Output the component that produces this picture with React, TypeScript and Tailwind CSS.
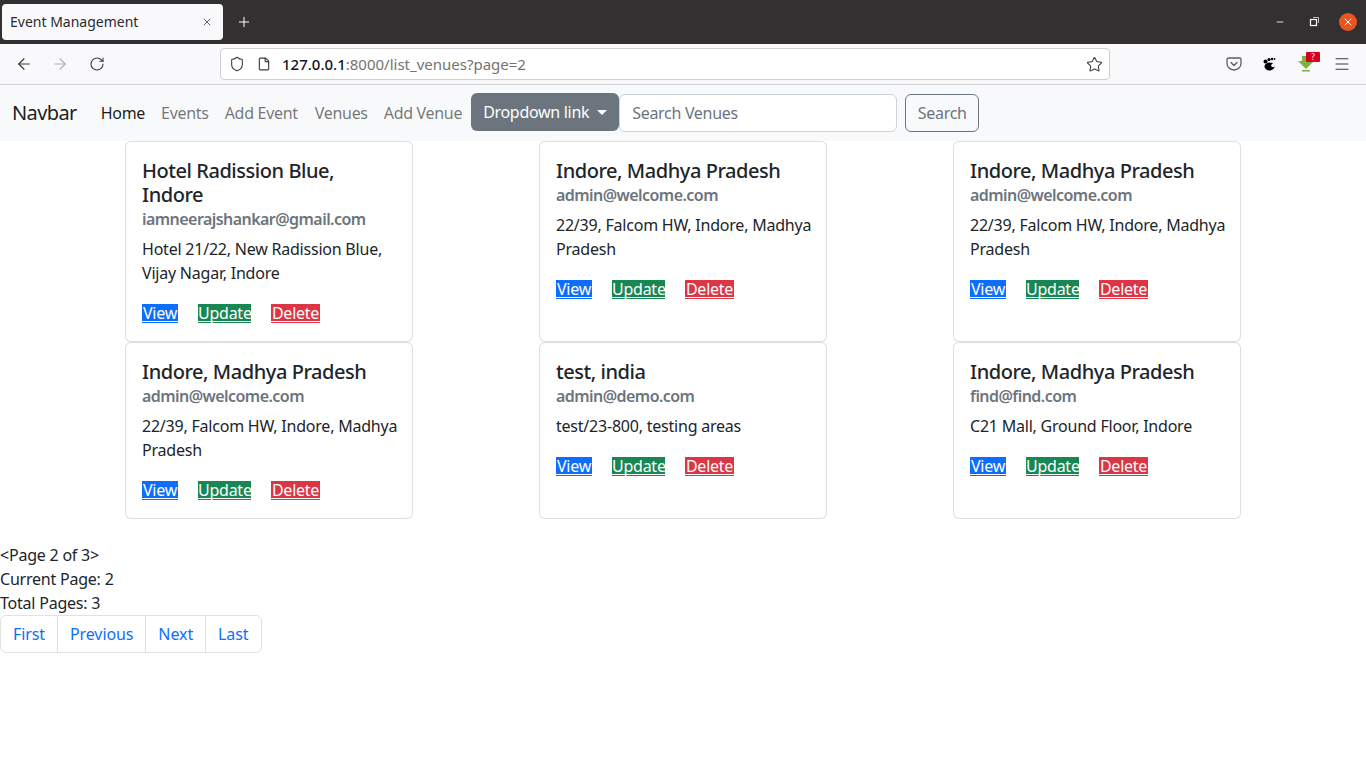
import { ArrowLeft, ArrowRight, RotateCw, Shield, File, Star, Menu, X, Plus, Minus } from "lucide-react";

const venues = [
  { name: "Hotel Radission Blue, Indore", email: "iamneerajshankar@gmail.com", address: "Hotel 21/22, New Radission Blue, Vijay Nagar, Indore" },
  { name: "Indore, Madhya Pradesh", email: "admin@welcome.com", address: "22/39, Falcom HW, Indore, Madhya Pradesh" },
  { name: "Indore, Madhya Pradesh", email: "admin@welcome.com", address: "22/39, Falcom HW, Indore, Madhya Pradesh" },
  { name: "Indore, Madhya Pradesh", email: "admin@welcome.com", address: "22/39, Falcom HW, Indore, Madhya Pradesh" },
  { name: "test, india", email: "admin@demo.com", address: "test/23-800, testing areas" },
  { name: "Indore, Madhya Pradesh", email: "find@find.com", address: "C21 Mall, Ground Floor, Indore" },
];

function BrowserChrome() {
  return (
    <div className="font-['Noto_Sans',sans-serif]">
      {/* Title bar */}
      <div className="flex h-11 items-center bg-[#323031] pl-0.5 pr-[9px]">
        <div className="flex h-9 w-[221px] items-center justify-between rounded bg-[#f9f9fb] pl-2 pr-2.5 text-[14px] text-[#2b2a33]">
          <span>Event Management</span>
          <X size={12} strokeWidth={1.5} />
        </div>
        <Plus size={16} strokeWidth={1.5} className="ml-[13px] text-white" />
        <div className="flex-1" />
        <Minus size={10} strokeWidth={2} className="mr-6 text-white" />
        <svg width="10" height="10" viewBox="0 0 10 10" className="mr-5 text-white" fill="none" stroke="currentColor">
          <rect x="1.5" y="2.5" width="6" height="6" strokeWidth="1.2" />
          <path d="M4 .5h5.5V6" strokeWidth=".7" />
        </svg>
        <div className="flex h-[18px] w-[18px] items-center justify-center rounded-full bg-[#e95420] text-white">
          <X size={12} strokeWidth={2} />
        </div>
      </div>

      {/* Address bar */}
      <div className="flex h-[41px] items-center border-b border-[#cfcfd1] bg-[#f9f9fb] pl-[15px] pr-[15px] text-[#3b3a42]">
        <ArrowLeft size={18} strokeWidth={1.5} />
        <ArrowRight size={18} strokeWidth={1.5} className="ml-[18px] text-[#b1b1b3]" />
        <RotateCw size={16} strokeWidth={1.6} className="ml-5" />
        <div className="ml-[115px] flex h-8 w-[890px] shrink-0 items-center rounded border border-[#cfcfd1] bg-white pl-2 pr-1.5">
          <Shield size={16} strokeWidth={1.6} />
          <File size={14} strokeWidth={2} className="ml-3" />
          <span className="ml-[11px] text-[15px] text-[#737373]">
            <span className="font-medium text-[#15141a]">127.0.0.1</span>:8000/list_venues?page=2
          </span>
          <div className="flex-1" />
          <Star size={17} strokeWidth={1.5} />
        </div>

        <svg width="16" height="14" viewBox="0 0 16 14" fill="none" stroke="#5b5b66" strokeWidth="1.300" className="ml-[116px]">
          <path d="M2.500 1h11A1.500 1.500 0 0 1 15 2.500V6.500a7 6.500 0 0 1-14 0V2.500A1.500 1.500 0 0 1 2.500 1z" />
          <path d="M5 5.500l3 3 3-3" strokeLinecap="round" />
        </svg>
        <svg width="16" height="16" viewBox="0 0 16 16" className="ml-5" fill="#000">
          <ellipse cx="7.500" cy="10.500" rx="5" ry="4" />
          <circle cx="3.500" cy="5.500" r="2" />
          <circle cx="7" cy="3.500" r="1.600" />
          <circle cx="10" cy="3" r="1.200" />
          <circle cx="12.500" cy="3" r=".9" />
          <circle cx="11" cy="9.500" r="1.800" fill="#f9f9fb" />
        </svg>
        <div className="relative ml-5 h-4 w-4">
          <svg width="16" height="16" viewBox="0 0 16 16" fill="#7cb342">
            <path d="M4 0h8v5h4l-8 8-8-8h4z" />
            <rect x="4" y="14" width="8" height="1.500" />
          </svg>
          <span className="absolute -right-[6px] -top-1 flex h-[10px] w-[14px] items-center justify-center rounded-[1px] bg-[#d70022] text-[8px] leading-none text-white">?</span>
        </div>
        <Menu size={18} strokeWidth={1.4} className="ml-[19px]" />
      </div>
    </div>
  );
}

function Navbar() {
  return (
    <nav className="flex h-14 items-center bg-[#f8f9fa] pl-3 text-base tracking-[-0.3px]">
      <span className="mr-6 text-xl tracking-[-0.6px] text-black/90">Navbar</span>
      <a className="pr-4 text-black/90">Home</a>
      <a className="pr-4 text-black/55">Events</a>
      <a className="pr-[17px] text-black/55">Add Event</a>
      <a className="pr-4 text-black/55">Venues</a>
      <a className="pr-[9px] text-black/55">Add Venue</a>
      <button className="flex h-[38px] w-[148px] -translate-y-px items-center justify-center gap-2 rounded-md bg-[#6c757d] text-white">
        Dropdown link
        <span className="h-0 w-0 border-x-[5px] border-t-[5px] border-x-transparent border-t-white" />
      </button>
      <div className="flex h-[38px] w-[278px] items-center rounded-md border border-[#ced4da] bg-white px-3 text-[#6c757d]">
        Search Venues
      </div>
      <button className="ml-2 h-[38px] w-[74px] rounded-md border border-[#6c757d] text-[#6c757d]">
        Search
      </button>
    </nav>
  );
}

function ActionLink({ label, width, bar, bg }: { label: string; width: string; bar: string; bg: string }) {
  return (
    <a className={`block border-b pb-px text-center text-white ${width} ${bar}`}>
      <span className={`block h-[17px] leading-[19px] ${bg}`}>{label}</span>
    </a>
  );
}

function VenueCard({ name, email, address }: { name: string; email: string; address: string }) {
  return (
    <div className="mx-auto flex w-[288px] flex-col rounded-md border border-black/[.125] bg-white px-4 pb-4 pt-[17px]">
      <h5 className="text-xl font-medium leading-6 tracking-[-0.45px]">{name}</h5>
      <h6 className="mb-1.5 font-semibold leading-6 tracking-[-0.55px] text-[#6c757d]">{email}</h6>
      <p className="-mr-1.5 mb-4 tracking-[-0.22px]">{address}</p>
      <div className="flex h-6 items-center gap-5 tracking-[-0.25px]">
        <ActionLink label="View" width="w-9" bar="border-[#0d6efd]" bg="bg-[#0d6efd]" />
        <ActionLink label="Update" width="w-[53px]" bar="border-[#198754]" bg="bg-[#198754]" />
        <ActionLink label="Delete" width="w-[49px]" bar="border-[#dc3545]" bg="bg-[#dc3545]" />
      </div>
    </div>
  );
}

export default function App() {
  return (
    <div className="min-h-screen bg-white font-['Noto_Sans',sans-serif] text-base leading-6 text-[#212529]">
      <BrowserChrome />
      <Navbar />

      <div className="mx-auto grid w-[1242px] grid-cols-3">
        {venues.map((v, i) => (
          <VenueCard key={i} {...v} />
        ))}
      </div>

      <div className="mt-6 tracking-[-0.22px]">
        <div>&lt;Page 2 of 3&gt;</div>
        <div>Current Page: 2</div>
        <div>Total Pages: 3</div>
      </div>

      <ul className="flex w-fit rounded-md border border-[#dee2e6] tracking-[-0.1px] text-[#0d6efd]">
        <li className="px-3 py-1.5">First</li>
        <li className="border-l border-[#dee2e6] px-3 py-1.5">Previous</li>
        <li className="border-l border-[#dee2e6] px-3 py-1.5">Next</li>
        <li className="border-l border-[#dee2e6] py-1.5 pl-3 pr-[13px]">Last</li>
      </ul>
    </div>
  );
}
